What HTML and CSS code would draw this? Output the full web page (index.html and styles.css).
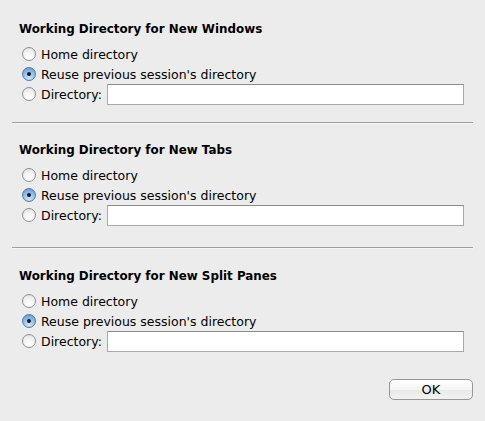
FILE: index.html
```html
<!DOCTYPE html>
<html>
<head>
<meta charset="utf-8">
<link rel="stylesheet" href="styles.css">
</head>
<body>
<div class="dialog">
  <section class="group">
    <div class="title">Working Directory for New Windows</div>
    <div class="options">
      <label class="row"><span class="radio"></span><span>Home directory</span></label>
      <label class="row"><span class="radio on"></span><span>Reuse previous session's directory</span></label>
      <label class="row"><span class="radio"></span><span class="lbl">Directory:</span><span class="field"></span></label>
    </div>
  </section>
  <div class="sep sep1"></div>
  <section class="group">
    <div class="title">Working Directory for New Tabs</div>
    <div class="options">
      <label class="row"><span class="radio"></span><span>Home directory</span></label>
      <label class="row"><span class="radio on"></span><span>Reuse previous session's directory</span></label>
      <label class="row"><span class="radio"></span><span class="lbl">Directory:</span><span class="field"></span></label>
    </div>
  </section>
  <div class="sep sep2"></div>
  <section class="group">
    <div class="title">Working Directory for New Split Panes</div>
    <div class="options">
      <label class="row"><span class="radio"></span><span>Home directory</span></label>
      <label class="row"><span class="radio on"></span><span>Reuse previous session's directory</span></label>
      <label class="row"><span class="radio"></span><span class="lbl">Directory:</span><span class="field"></span></label>
    </div>
  </section>
  <div class="footer">
    <button class="ok">OK</button>
  </div>
</div>
</body>
</html>
```
FILE: styles.css
```css
html, body {
  margin: 0;
  padding: 0;
  background: #ececec;
}
body {
  width: 485px;
  height: 421px;
  overflow: hidden;
  font-family: "DejaVu Sans", "Liberation Sans", sans-serif;
  font-size: 12.5px;
  color: #000;
}
.dialog {
  padding: 21px 12px 0 12px;
}
.group {
  padding: 0 9px 0 7px;
}
.title {
  font-weight: bold;
  font-size: 11.9px;
  line-height: 17px;
  height: 17px;
  margin-bottom: 6px;
}
.options {
  display: flex;
  flex-direction: column;
}
.row {
  display: flex;
  align-items: center;
  height: 20px;
  margin-left: 3px;
  gap: 5px;
}
.radio {
  box-sizing: border-box;
  width: 14px;
  height: 14px;
  border-radius: 50%;
  border: 1px solid #8e8e8e;
  background: radial-gradient(circle at 50% 80%, #ffffff 0%, #f3f3f3 50%, #dcdcdc 100%);
  flex: none;
  position: relative;
}
.radio.on {
  border-color: #5677a4;
  background: radial-gradient(circle at 50% 85%, #cfe6fb 0%, #8ebce8 55%, #5f8fcc 100%);
}
.radio.on::after {
  content: "";
  position: absolute;
  left: 4px;
  top: 4px;
  width: 4px;
  height: 4px;
  border-radius: 50%;
  background: #101a2a;
}
.lbl {
  flex: none;
}
.field {
  box-sizing: border-box;
  height: 21px;
  flex: 1;
  background: #fff;
  border: 1px solid #a9a9a9;
  border-top-color: #8c8c8c;
}
.sep {
  height: 1px;
  background: #9f9f9f;
  border-bottom: 1px solid #f6f6f6;
  width: 461px;
}
.sep1 {
  margin: 18px 0 18px 0;
}
.sep2 {
  margin: 22px 0 19px 0;
}
.footer {
  display: flex;
  justify-content: flex-end;
  margin-top: 28px;
}
.ok {
  box-sizing: border-box;
  width: 84px;
  height: 21px;
  border: 1px solid #979797;
  border-radius: 5px;
  background: linear-gradient(#ffffff, #f4f4f4 50%, #e9e9e9 51%, #f2f2f2);
  font-family: "DejaVu Sans", "Liberation Sans", sans-serif;
  font-size: 13px;
  color: #000;
  padding: 0;
  line-height: 19px;
}
```
